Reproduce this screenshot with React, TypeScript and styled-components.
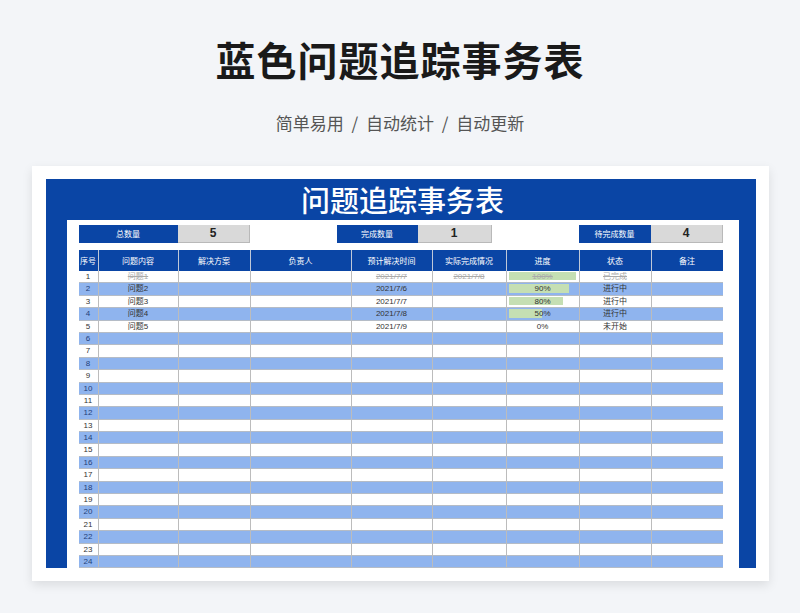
import styled, { createGlobalStyle } from "styled-components";

const GlobalStyle = createGlobalStyle`
  html, body { margin: 0; padding: 0; background: #f3f5f8; }
  body { font-family: "Noto Sans CJK SC", "Liberation Sans", sans-serif; }
`;

const cols = "19px 80px 72px 101px 81px 74px 73px 72px 72px";

const rows = [
  { n: 1, q: "问题1", plan: "2021/7/7", done: "2021/7/8", p: 100, s: "已完成" },
  { n: 2, q: "问题2", plan: "2021/7/6", done: "", p: 90, s: "进行中" },
  { n: 3, q: "问题3", plan: "2021/7/7", done: "", p: 80, s: "进行中" },
  { n: 4, q: "问题4", plan: "2021/7/8", done: "", p: 50, s: "进行中" },
  { n: 5, q: "问题5", plan: "2021/7/9", done: "", p: 0, s: "未开始" },
];

const App = () => (
  <Page>
    <GlobalStyle />
    <Title>蓝色问题追踪事务表</Title>
    <Subtitle>简单易用 / 自动统计 / 自动更新</Subtitle>
    <Card>
      <Frame>
        <FrameTitle>问题追踪事务表</FrameTitle>
        <Sheet>
          <Summary>
            <Stat><StatLabel $w={99}>总数量</StatLabel><StatValue $w={72}>5</StatValue></Stat>
            <Stat><StatLabel $w={81}>完成数量</StatLabel><StatValue $w={74}>1</StatValue></Stat>
            <Stat><StatLabel $w={72}>待完成数量</StatLabel><StatValue $w={72}>4</StatValue></Stat>
          </Summary>
          <Table>
            <HeadRow>
              {["序号", "问题内容", "解决方案", "负责人", "预计解决时间", "实际完成情况", "进度", "状态", "备注"].map((h) => (
                <HeadCell key={h}>{h}</HeadCell>
              ))}
            </HeadRow>
            {Array.from({ length: 24 }, (_, i) => {
              const r = rows[i];
              const done = r?.p === 100;
              return (
                <Row key={i} $alt={i % 2 === 1}>
                  <NumCell $alt={i % 2 === 1}>{i + 1}</NumCell>
                  <Cell $struck={done}>{r?.q}</Cell>
                  <Cell />
                  <Cell />
                  <Cell $struck={done}>{r?.plan}</Cell>
                  <Cell $struck={done}>{r?.done}</Cell>
                  <Cell $struck={done}>
                    {r && r.p > 0 && <Bar style={{ width: `${r.p * 0.94}%` }} />}
                    {r && <BarText>{r.p}%</BarText>}
                  </Cell>
                  <Cell $struck={done}>{r?.s}</Cell>
                  <Cell />
                </Row>
              );
            })}
          </Table>
        </Sheet>
      </Frame>
    </Card>
  </Page>
);

const Page = styled.div`
  width: 800px;
  height: 613px;
  overflow: hidden;
  display: flex;
  flex-direction: column;
  align-items: center;
`;

const Title = styled.h1`
  margin: 33px 0 0;
  font-size: 40px;
  line-height: 52px;
  font-weight: 700;
  color: #1a1a1a;
  letter-spacing: 1px;
`;

const Subtitle = styled.div`
  margin-top: 26px;
  font-size: 17px;
  line-height: 24px;
  color: #555;
  word-spacing: 4px;
`;

const Card = styled.div`
  margin-top: 31px;
  width: 737px;
  height: 415px;
  background: #fff;
  box-shadow: 0 4px 10px rgba(0, 0, 0, 0.1);
  padding: 13px 0 0 14px;
  box-sizing: border-box;
  flex-shrink: 0;
`;

const Frame = styled.div`
  width: 710px;
  height: 389px;
  background: #0a45a5;
  padding: 0 17px 0 21px;
  box-sizing: border-box;
  overflow: hidden;
  display: flex;
  flex-direction: column;
`;

const FrameTitle = styled.div`
  height: 43px;
  line-height: 41px;
  text-align: center;
  color: #fff;
  font-size: 29px;
  font-weight: 500;
`;

const Sheet = styled.div`
  flex: 1;
  background: #fff;
  padding: 5px 16px 0 12px;
`;

const Summary = styled.div`
  display: flex;
  justify-content: space-between;
  height: 18px;
  margin-bottom: 7px;
`;

const Stat = styled.div`
  display: flex;
`;

const StatLabel = styled.div<{ $w: number }>`
  width: ${(p) => p.$w}px;
  background: #0a45a5;
  color: #fff;
  font-size: 8px;
  line-height: 18px;
  text-align: center;
`;

const StatValue = styled.div<{ $w: number }>`
  width: ${(p) => p.$w}px;
  background: #d9d9d9;
  border-right: 1px solid #b9b9b9;
  border-bottom: 1px solid #b9b9b9;
  box-sizing: border-box;
  color: #222;
  font-family: "Liberation Sans", sans-serif;
  font-weight: 700;
  font-size: 12px;
  line-height: 17px;
  text-align: center;
`;

const Table = styled.div`
  display: flex;
  flex-direction: column;
`;

const HeadRow = styled.div`
  display: grid;
  grid-template-columns: ${cols};
  height: 21px;
  background: #0a45a5;
`;

const HeadCell = styled.div`
  color: #fff;
  font-size: 8px;
  line-height: 21px;
  text-align: center;
  border-left: 1px solid #bfc8d8;
  overflow: hidden;
  white-space: nowrap;
  &:first-child { border-left: none; }
`;

const Row = styled.div<{ $alt: boolean }>`
  display: grid;
  grid-template-columns: ${cols};
  height: 12.4px;
  flex-shrink: 0;
  background: ${(p) => (p.$alt ? "#8fb4ee" : "#fff")};
  border-bottom: 1px solid #b5bcc6;
  box-sizing: border-box;
`;

const Cell = styled.div<{ $struck?: boolean }>`
  position: relative;
  border-left: 1px solid #bcbcbc;
  font-family: "Liberation Sans", "Noto Sans CJK SC", sans-serif;
  font-size: 8px;
  line-height: 11px;
  text-align: center;
  white-space: nowrap;
  color: ${(p) => (p.$struck ? "#aaa" : "#333")};
  text-decoration: ${(p) => (p.$struck ? "line-through" : "none")};
`;

const NumCell = styled.div<{ $alt: boolean }>`
  font-family: "Liberation Sans", sans-serif;
  font-size: 8px;
  line-height: 11px;
  text-align: center;
  color: ${(p) => (p.$alt ? "#1f3f7a" : "#333")};
`;

const Bar = styled.div`
  position: absolute;
  left: 2px;
  top: 1px;
  bottom: 2px;
  background: #c5dfb3;
`;

const BarText = styled.span`
  position: relative;
`;

export default App;
